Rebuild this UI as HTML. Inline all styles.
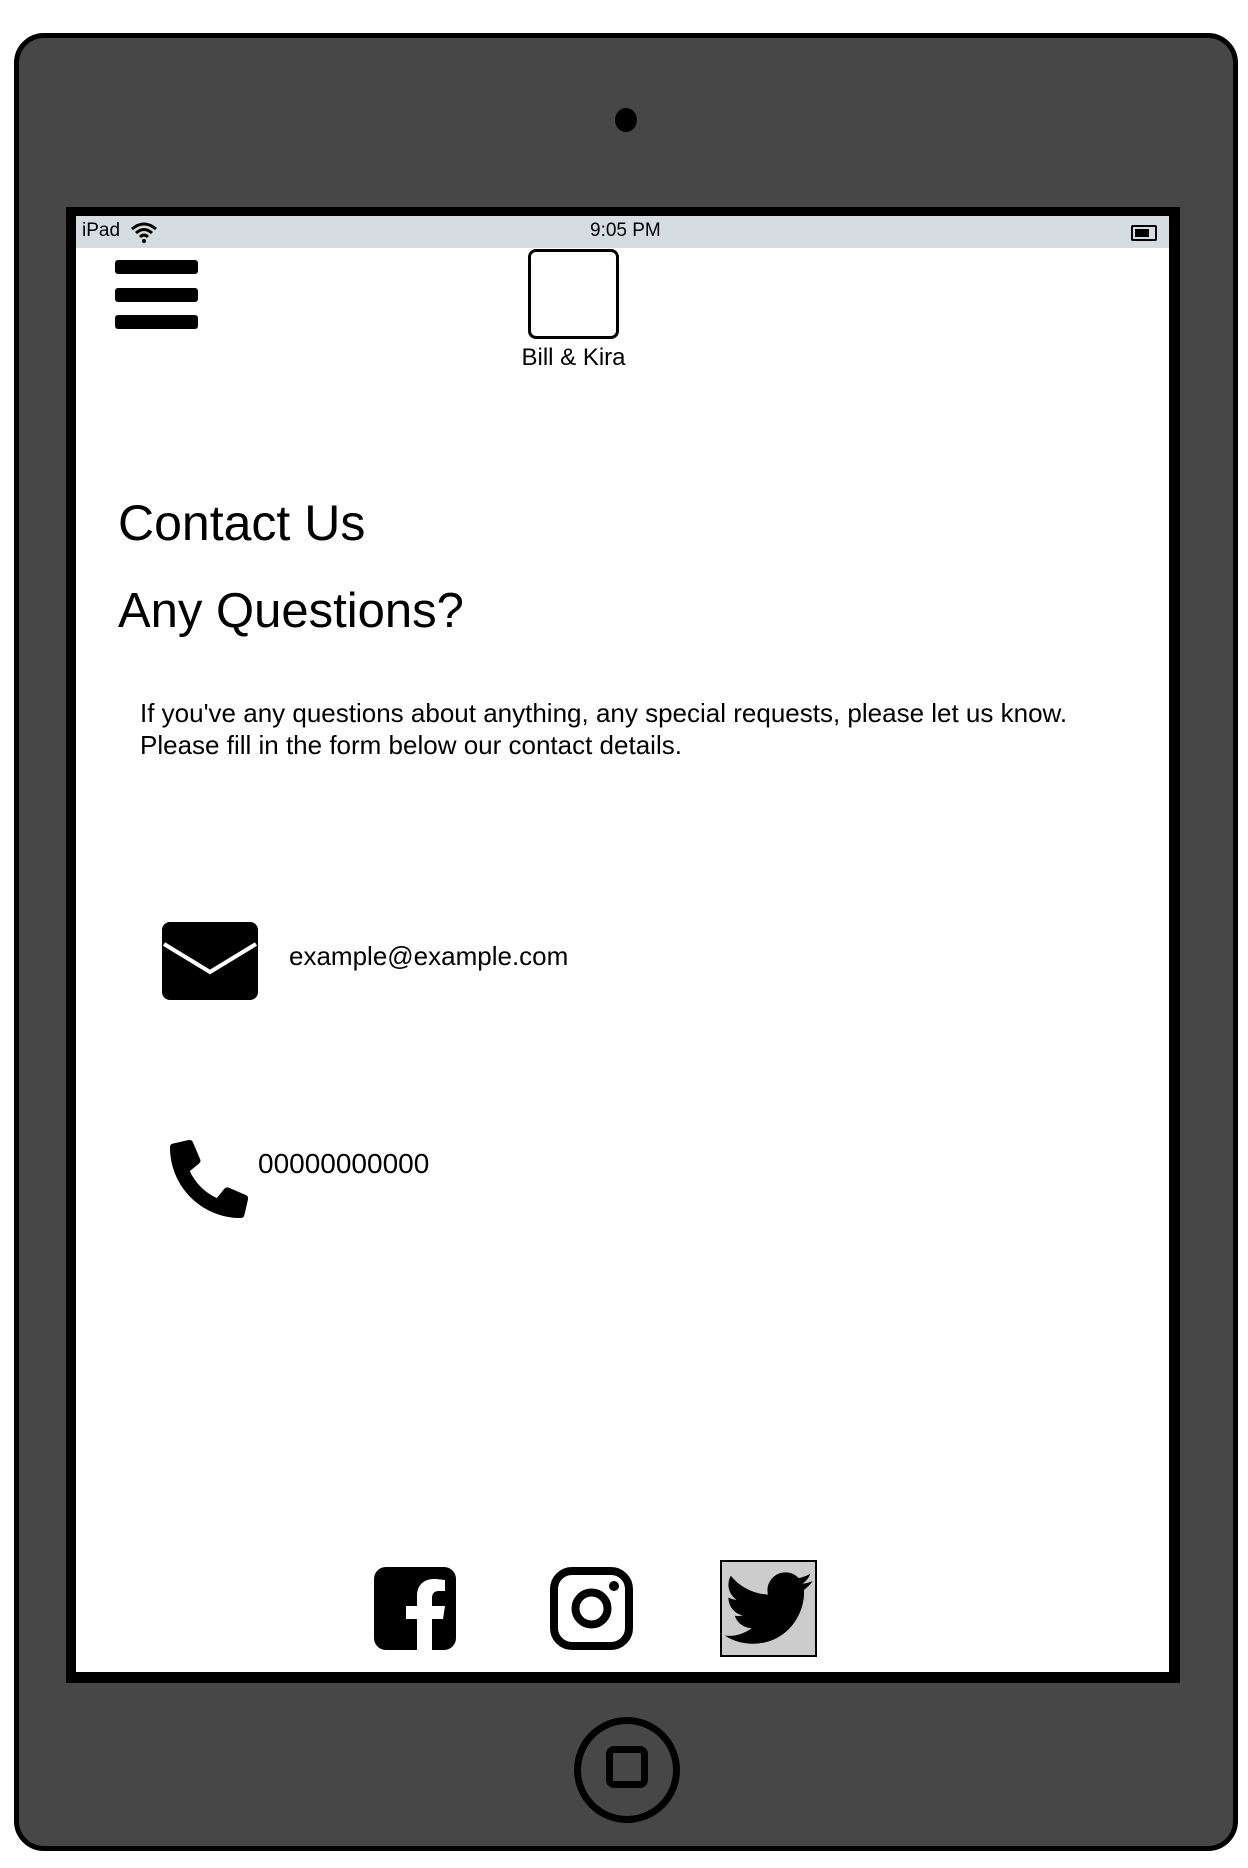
<!DOCTYPE html>
<html><head><style>
html,body{margin:0;padding:0;background:#fff;width:1248px;height:1868px;overflow:hidden;font-family:"Liberation Sans",sans-serif;}
.abs{position:absolute;}
</style></head><body>
<div class="abs" style="left:14px;top:33px;width:1224px;height:1818px;background:#474747;border:5px solid #000;border-radius:30px;box-sizing:border-box;"></div>
<div class="abs" style="left:615px;top:108px;width:22px;height:24px;border-radius:50%;background:#000;"></div>
<div class="abs" style="left:66px;top:207px;width:1114px;height:1476px;background:#000;"></div>
<div class="abs" style="left:76px;top:216px;width:1093px;height:1456px;background:#fff;"></div>
<div class="abs" style="left:76px;top:216px;width:1093px;height:32px;background:#d6dde0;"></div>
<div class="abs" style="left:82px;top:220px;font-size:19px;">iPad</div>
<svg class="abs" style="left:130px;top:221px" width="28" height="22" viewBox="0 0 28 22"><path d="M2 8 Q14 -2 26 8" stroke="#000" stroke-width="3" fill="none"/><path d="M6 12 Q14 5 22 12" stroke="#000" stroke-width="3" fill="none"/><path d="M10 16 Q14 12 18 16" stroke="#000" stroke-width="3" fill="none"/><circle cx="14" cy="20" r="2"/></svg>
<div class="abs" style="left:590px;top:220px;font-size:19px;">9:05 PM</div>
<div class="abs" style="left:1131px;top:225px;width:22px;height:12px;border:2px solid #000;border-radius:2px;"><div style="margin:2px;width:14px;height:8px;background:#000"></div></div>
<div class="abs" style="left:115px;top:260px;width:83px;height:14px;background:#000;border-radius:3px;"></div>
<div class="abs" style="left:115px;top:288px;width:83px;height:14px;background:#000;border-radius:3px;"></div>
<div class="abs" style="left:115px;top:315px;width:83px;height:14px;background:#000;border-radius:3px;"></div>
<div class="abs" style="left:528px;top:249px;width:91px;height:90px;border:3px solid #000;border-radius:8px;box-sizing:border-box;"></div>
<div class="abs" style="left:497px;top:344px;width:153px;text-align:center;font-size:24px;">Bill &amp; Kira</div>
<div class="abs" style="left:118px;top:494px;font-size:50px;white-space:nowrap;">Contact Us</div>
<div class="abs" style="left:118px;top:583px;font-size:49px;white-space:nowrap;">Any Questions?</div>
<div class="abs" style="left:140px;top:697px;font-size:26px;line-height:32px;white-space:nowrap;">If you've any questions about anything, any special requests, please let us know.<br>Please fill in the form below our contact details.</div>
<svg class="abs" style="left:162px;top:922px" width="96" height="78" viewBox="0 0 96 78"><rect x="0" y="0" width="96" height="78" rx="8" fill="#000"/><path d="M2 22 L48 50 L94 22" stroke="#fff" stroke-width="4" fill="none"/></svg>
<div class="abs" style="left:289px;top:941px;font-size:26px;">example@example.com</div>
<svg class="abs" style="left:170px;top:1140px" width="78" height="78" viewBox="0 0 512 512"><path d="M497 361l-112-48a24 24 0 0 0-28 7l-50 61A371 371 0 0 1 130 204l61-50a24 24 0 0 0 7-28L150 14a24 24 0 0 0-28-14L18 24A24 24 0 0 0 0 48c0 257 208 464 464 464a24 24 0 0 0 24-18l24-104a24 24 0 0 0-15-29z"/></svg>
<div class="abs" style="left:258px;top:1148px;font-size:28px;">00000000000</div>
<svg class="abs" style="left:374px;top:1567px" width="82" height="83" viewBox="0 0 82 83"><rect width="82" height="83" rx="12" fill="#000"/><path d="M58 83V52h11l2-13H58v-8c0-4 2-7 7-7h6V13c-2 0-6-1-11-1-10 0-17 6-17 17v10H32v13h11v31z" fill="#fff"/></svg>
<svg class="abs" style="left:550px;top:1567px" width="83" height="83" viewBox="0 0 83 83"><rect x="4" y="4" width="75" height="75" rx="18" fill="none" stroke="#000" stroke-width="8"/><circle cx="41.5" cy="41.5" r="16" fill="none" stroke="#000" stroke-width="8"/><circle cx="64" cy="19" r="5"/></svg>
<div class="abs" style="left:720px;top:1560px;width:97px;height:97px;background:#ccc;border:2px solid #000;box-sizing:border-box;"></div>
<svg class="abs" style="left:725px;top:1572px" width="88" height="72" viewBox="0 0 512 416"><path d="M459 104c1 4 1 9 1 13 0 139-106 299-299 299-59 0-115-17-161-47 8 1 16 1 25 1 49 0 94-17 130-45-46-1-85-31-98-72 7 1 13 2 20 2 9 0 19-1 27-4-48-10-84-52-84-103v-1c14 8 30 13 47 13-28-19-47-51-47-87 0-20 5-38 14-53 52 64 129 105 216 110-2-8-3-16-3-24 0-58 47-105 105-105 30 0 58 13 77 33 24-4 46-13 67-25-8 24-25 45-46 58 21-2 42-8 60-16-14 21-32 39-52 53z"/></svg>
<div class="abs" style="left:574px;top:1717px;width:106px;height:106px;border:7px solid #000;border-radius:50%;box-sizing:border-box;"></div>
<div class="abs" style="left:606px;top:1746px;width:42px;height:42px;border:7px solid #000;border-radius:8px;box-sizing:border-box;"></div>
</body></html>
